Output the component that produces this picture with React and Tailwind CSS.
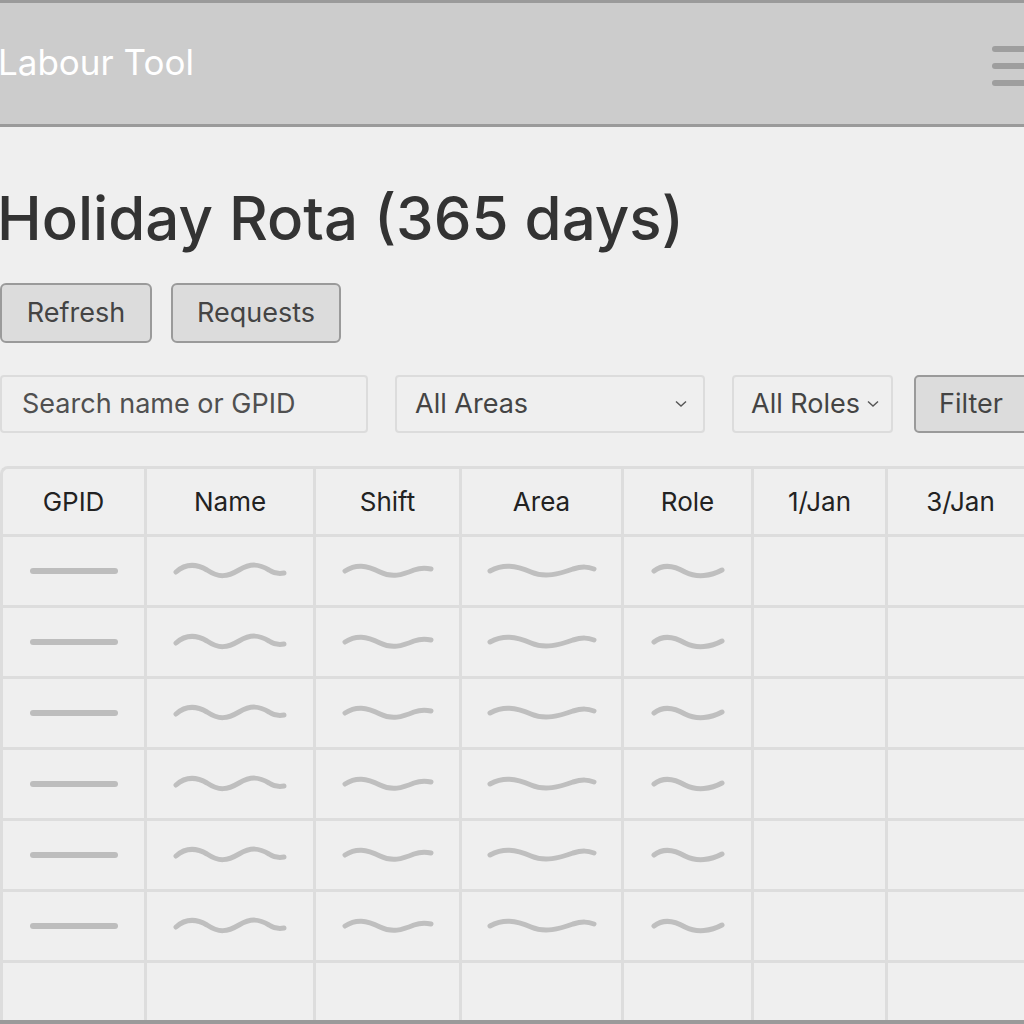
import React from 'react';

const cols = ['GPID', 'Name', 'Shift', 'Area', 'Role', '1/Jan', '3/Jan'];

const Line = () => (
  <svg width="88" height="12" viewBox="0 0 88 12">
    <path d="M3 6 H85" stroke="#bdbdbd" strokeWidth="6" strokeLinecap="round" fill="none" />
  </svg>
);

const Wave = ({ w, d }) => (
  <svg width={w} height="18" viewBox={`0 0 ${w} 18`}>
    <path d={d} stroke="#bfbfbf" strokeWidth="5" strokeLinecap="round" fill="none" />
  </svg>
);

const nameWave = 'M3 10 C12 2 22 1 34 8 C46 16 54 15 66 8 C78 1 86 2 96 8 C102 12 106 12 111 11';
const shiftWave = 'M3 9 C14 2 24 3 38 10 C50 16 60 13 72 8 C80 5 85 6 89 7';
const areaWave = 'M3 9 C16 2 28 3 44 10 C58 16 72 12 86 7 C96 4 101 5 107 7';
const roleWave = 'M3 9 C12 2 22 3 34 10 C46 16 60 14 71 8';

function Cell({ children, last }) {
  return (
    <div className={'h-[71px] border-b-[3px] border-[#dddddd] flex items-center justify-center ' + (last ? '' : 'border-r-[3px]')}>
      {children}
    </div>
  );
}

export default function App() {
  const rows = [0, 1, 2, 3, 4, 5];
  return (
    <div className="w-[1024px] h-[1024px] overflow-hidden bg-[#efefef] flex flex-col border-t-[3px] border-b-[4px] border-[#9a9a9a]" style={{ fontFamily: 'Inter, Roboto, "Liberation Sans", sans-serif' }}>
      <div className="h-[124px] shrink-0 bg-[#cccccc] border-b-[3px] border-[#9a9a9a] flex items-center justify-between">
        <div className="text-[35px] text-white pb-[2px] -ml-[2px]">Labour Tool</div>
        <div className="flex flex-col gap-[11px] -mr-[8px] mt-[4px]">
          <div className="w-[40px] h-[6px] rounded-full bg-[#9e9e9e]" />
          <div className="w-[40px] h-[6px] rounded-full bg-[#9e9e9e]" />
          <div className="w-[40px] h-[6px] rounded-full bg-[#9e9e9e]" />
        </div>
      </div>

      <h1 className="mt-[53px] text-[60px] font-medium text-[#333333] leading-[76px] -ml-[3px] whitespace-nowrap">Holiday Rota (365 days)</h1>

      <div className="flex gap-[19px] mt-[27px]">
        <button className="w-[152px] h-[60px] shrink-0 bg-[#dcdcdc] border-[2px] border-[#9a9a9a] rounded-[6px] text-[27px] text-[#444444]">Refresh</button>
        <button className="w-[170px] h-[60px] shrink-0 bg-[#dcdcdc] border-[2px] border-[#9a9a9a] rounded-[6px] text-[27px] text-[#444444]">Requests</button>
      </div>

      <div className="flex items-center mt-[32px] h-[58px]">
        <div className="w-[368px] h-[58px] shrink-0 border-[2px] border-[#dcdcdc] rounded-[4px] flex items-center pl-[20px] text-[27px] text-[#505050]">Search name or GPID</div>
        <div className="ml-[27px] w-[310px] h-[58px] shrink-0 border-[2px] border-[#dcdcdc] rounded-[4px] flex items-center justify-between pl-[18px] pr-[16px] text-[27px] text-[#444444]">
          <span>All Areas</span>
          <svg width="12" height="8" viewBox="0 0 12 8"><path d="M1 1.5 L6 6 L11 1.5" stroke="#555" strokeWidth="1.4" fill="none" /></svg>
        </div>
        <div className="ml-[27px] w-[161px] h-[58px] shrink-0 border-[2px] border-[#dcdcdc] rounded-[4px] flex items-center justify-between pl-[17px] pr-[12px] text-[27px] text-[#444444]">
          <span>All Roles</span>
          <svg width="12" height="8" viewBox="0 0 12 8"><path d="M1 1.5 L6 6 L11 1.5" stroke="#555" strokeWidth="1.4" fill="none" /></svg>
        </div>
        <button className="ml-[21px] w-[120px] h-[58px] shrink-0 bg-[#dcdcdc] border-[2px] border-[#9a9a9a] rounded-[5px] text-[27px] text-[#444444] text-left pl-[23px]">Filter</button>
      </div>

      <div className="mt-[33px] w-[1030px] border-t-[3px] border-l-[3px] border-[#dddddd] rounded-tl-[8px] grid grid-cols-[144px_169px_146px_162px_130px_134px_145px]">
        {cols.map((c, i) => (
          <div key={c} className={'h-[68px] border-b-[3px] border-[#dddddd] flex items-center justify-center text-[26px] text-[#222222] ' + (i < 6 ? 'border-r-[3px]' : '')}>
            {c}
          </div>
        ))}
        {rows.map((r) => (
          <React.Fragment key={r}>
            <Cell><Line /></Cell>
            <Cell><Wave w={114} d={nameWave} /></Cell>
            <Cell><Wave w={92} d={shiftWave} /></Cell>
            <Cell><Wave w={110} d={areaWave} /></Cell>
            <Cell><Wave w={74} d={roleWave} /></Cell>
            <Cell />
            <Cell last />
          </React.Fragment>
        ))}
        {cols.map((c, i) => (
          <Cell key={'e' + c} last={i === 6} />
        ))}
      </div>
    </div>
  );
}
